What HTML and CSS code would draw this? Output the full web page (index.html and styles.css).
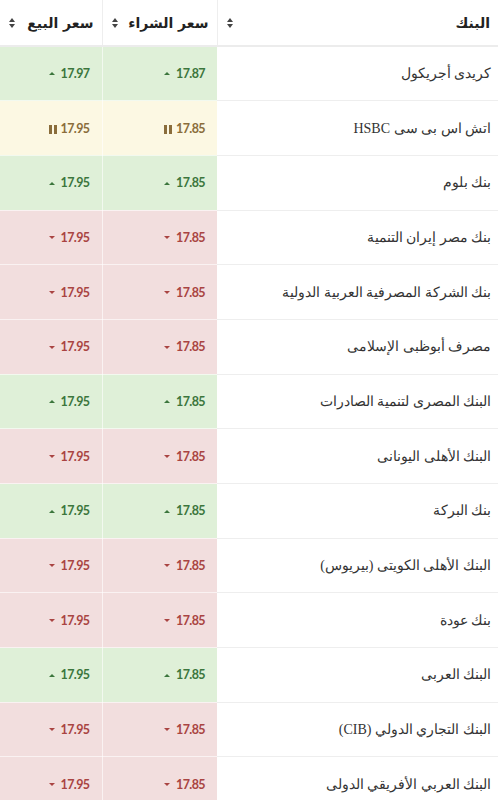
FILE: index.html
```html
<!DOCTYPE html>
<html lang="ar" dir="rtl">
<head>
<meta charset="utf-8">
<link rel="stylesheet" href="styles.css">
</head>
<body>
<table class="rates">
  <thead>
    <tr>
      <th class="col-bank"><span class="th-label">البنك</span><span class="sort"></span></th>
      <th class="col-buy"><span class="th-label">سعر الشراء</span><span class="sort"></span></th>
      <th class="col-sell"><span class="th-label">سعر البيع</span><span class="sort"></span></th>
    </tr>
  </thead>
  <tbody>
    <tr class="up"><td class="bank">كريدى أجريكول</td><td class="num"><span class="val">17.87</span><span class="ind"></span></td><td class="num"><span class="val">17.97</span><span class="ind"></span></td></tr>
    <tr class="same"><td class="bank">اتش اس بى سى HSBC</td><td class="num"><span class="val">17.85</span><span class="ind"></span></td><td class="num"><span class="val">17.95</span><span class="ind"></span></td></tr>
    <tr class="up"><td class="bank">بنك بلوم</td><td class="num"><span class="val">17.85</span><span class="ind"></span></td><td class="num"><span class="val">17.95</span><span class="ind"></span></td></tr>
    <tr class="down"><td class="bank">بنك مصر إيران التنمية</td><td class="num"><span class="val">17.85</span><span class="ind"></span></td><td class="num"><span class="val">17.95</span><span class="ind"></span></td></tr>
    <tr class="down"><td class="bank">بنك الشركة المصرفية العربية الدولية</td><td class="num"><span class="val">17.85</span><span class="ind"></span></td><td class="num"><span class="val">17.95</span><span class="ind"></span></td></tr>
    <tr class="down"><td class="bank">مصرف أبوظبى الإسلامى</td><td class="num"><span class="val">17.85</span><span class="ind"></span></td><td class="num"><span class="val">17.95</span><span class="ind"></span></td></tr>
    <tr class="up"><td class="bank">البنك المصرى لتنمية الصادرات</td><td class="num"><span class="val">17.85</span><span class="ind"></span></td><td class="num"><span class="val">17.95</span><span class="ind"></span></td></tr>
    <tr class="down"><td class="bank">البنك الأهلى اليونانى</td><td class="num"><span class="val">17.85</span><span class="ind"></span></td><td class="num"><span class="val">17.95</span><span class="ind"></span></td></tr>
    <tr class="up"><td class="bank">بنك البركة</td><td class="num"><span class="val">17.85</span><span class="ind"></span></td><td class="num"><span class="val">17.95</span><span class="ind"></span></td></tr>
    <tr class="down"><td class="bank">البنك الأهلى الكويتى (بيريوس)</td><td class="num"><span class="val">17.85</span><span class="ind"></span></td><td class="num"><span class="val">17.95</span><span class="ind"></span></td></tr>
    <tr class="down"><td class="bank">بنك عودة</td><td class="num"><span class="val">17.85</span><span class="ind"></span></td><td class="num"><span class="val">17.95</span><span class="ind"></span></td></tr>
    <tr class="up"><td class="bank">البنك العربى</td><td class="num"><span class="val">17.85</span><span class="ind"></span></td><td class="num"><span class="val">17.95</span><span class="ind"></span></td></tr>
    <tr class="down"><td class="bank">البنك التجاري الدولي (CIB)</td><td class="num"><span class="val">17.85</span><span class="ind"></span></td><td class="num"><span class="val">17.95</span><span class="ind"></span></td></tr>
    <tr class="down"><td class="bank">البنك العربي الأفريقي الدولى</td><td class="num"><span class="val">17.85</span><span class="ind"></span></td><td class="num"><span class="val">17.95</span><span class="ind"></span></td></tr>
  </tbody>
</table>
</body>
</html>
```

FILE: styles.css
```css
html, body {
  margin: 0;
  padding: 0;
  background: #fff;
}
body {
  width: 498px;
  font-family: "DejaVu Sans", sans-serif;
}
.rates {
  width: 498px;
  border-collapse: collapse;
  table-layout: fixed;
  direction: rtl;
}
.col-bank { width: 281px; }
.col-buy { width: 115px; }
.col-sell { width: 102px; }

.rates th {
  height: 46px;
  padding: 0 8px;
  box-sizing: border-box;
  text-align: right;
  font-weight: bold;
  font-size: 14px;
  color: #222;
  border-left: 1px solid #eeeeee;
  border-bottom: 2px solid #ececec;
  vertical-align: middle;
  position: relative;
}
.rates th:last-child { border-left: none; }
.th-label { display: inline-block; }
.col-buy, .col-sell { padding-right: 11px; }

.sort {
  position: absolute;
  left: 9px;
  top: 50%;
  margin-top: -5px;
  width: 7px;
  height: 10px;
}
.sort::before, .sort::after {
  content: "";
  position: absolute;
  left: 0;
  border-left: 3.5px solid transparent;
  border-right: 3.5px solid transparent;
}
.sort::before { top: 0; border-bottom: 4px solid #444; }
.sort::after { bottom: 0; border-top: 4px solid #444; }

.rates tbody tr { height: 54.7px; }
.rates td {
  padding: 0 12px;
  border-bottom: 1px solid #eeeeee;
  vertical-align: middle;
}
.rates td.bank {
  padding-right: 7px;
  font-family: "Liberation Serif", serif;
  font-size: 14px;
  color: #333;
  background: #fff;
}
.rates td.num {
  text-align: right;
  direction: rtl;
  border-left: 1px solid rgba(255,255,255,0.6);
  border-bottom: 1px solid rgba(255,255,255,0.6);
  font-family: Lato, sans-serif;
  font-weight: bold;
  font-size: 12.5px;
  letter-spacing: -0.6px;
}
.rates td.num:last-child { border-left: none; }
.val { display: inline-block; margin-left: 6px; }
.ind {
  display: inline-block;
  vertical-align: middle;
  position: relative;
  top: -1px;
}

.up td.num { background: #dff0d8; color: #3c763d; }
.up .ind {
  width: 0; height: 0;
  border-left: 3.5px solid transparent;
  border-right: 3.5px solid transparent;
  border-bottom: 3px solid #3c763d;
}
.down td.num { background: #f2dede; color: #a94442; }
.down .ind {
  width: 0; height: 0;
  border-left: 3.5px solid transparent;
  border-right: 3.5px solid transparent;
  border-top: 3px solid #a94442;
}
.same td.num { background: #fcf8e3; color: #8a6d3b; }
.same .val { margin-left: 4px; }
.same .ind {
  width: 0;
  height: 9px;
  border-left: 3px solid #8a6d3b;
  box-shadow: -5px 0 0 #8a6d3b;
  margin-left: 5px;
  top: 0;
}
```
